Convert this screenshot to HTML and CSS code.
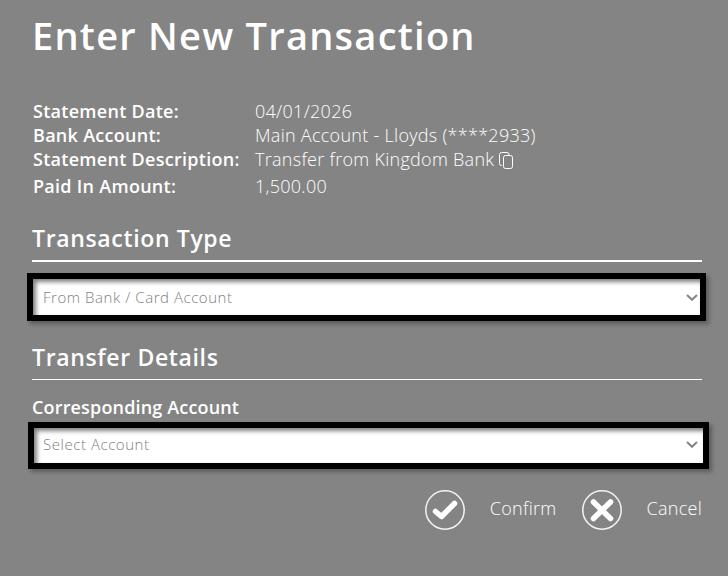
FILE: index.html
```html
<!DOCTYPE html>
<html lang="en">
<head>
    <meta charset="UTF-8">
    <meta name="viewport" content="width=device-width, initial-scale=1.0">
    <title>Enter New Transaction</title>
    <link rel="stylesheet" href="styles.css">
</head>
<body>
    <h1>Enter New Transaction</h1>

    <dl class="summary">
        <dt>Statement Date:</dt>
        <dd>04/01/2026</dd>
        <dt>Bank Account:</dt>
        <dd>Main Account - Lloyds (****2933)</dd>
        <dt>Statement Description:</dt>
        <dd>Transfer from Kingdom Bank
            <svg class="copy" width="16" height="18" viewBox="0 0 16 18">
                <path d="M4 13.5H3.5A2 2 0 0 1 1.5 11.5V2.5A2 2 0 0 1 3.5 .5H9A2 2 0 0 1 11 2.5V3"/>
                <rect x="5.5" y="3.5" width="9" height="13" rx="2"/>
            </svg>
        </dd>
        <dt>Paid In Amount:</dt>
        <dd>1,500.00</dd>
    </dl>

    <h2 class="type-title">Transaction Type</h2>
    <div class="select select-type">
        <span>From Bank / Card Account</span>
        <svg class="arrow" width="12" height="8" viewBox="0 0 12 8"><path d="M1 2L6 6.8L11 2"/></svg>
    </div>

    <h2 class="details-title">Transfer Details</h2>
    <p class="label">Corresponding Account</p>
    <div class="select select-account">
        <span>Select Account</span>
        <svg class="arrow" width="12" height="8" viewBox="0 0 12 8"><path d="M1 2L6 6.8L11 2"/></svg>
    </div>

    <div class="buttons">
        <a class="confirm">
            <svg class="round" width="40" height="40" viewBox="0 0 40 40">
                <circle cx="20" cy="20" r="19.2"/>
                <path d="M10.5 21.5L16.5 26.5L29.5 13.5"/>
            </svg>
            <span>Confirm</span>
        </a>
        <a class="cancel">
            <svg class="round" width="40" height="40" viewBox="0 0 40 40">
                <circle cx="20" cy="20" r="19.2"/>
                <path d="M11.5 12L28.5 28.5M28.5 12L11.5 28.5"/>
            </svg>
            <span>Cancel</span>
        </a>
    </div>
</body>
</html>
```
FILE: styles.css
```css
body {
    margin: 0;
    padding: 9px 26px 0 32px;
    height: 576px;
    box-sizing: border-box;
    overflow: hidden;
    background-color: #848484;
    color: white;
    font-family: 'Open Sans', 'Liberation Sans', sans-serif;
    font-size: 18px;
    font-weight: 300;
    letter-spacing: 0.28px;
}
h1 {
    margin: 0 0 38px;
    font-size: 38px;
    line-height: 52px;
    font-weight: 600;
    letter-spacing: 1.25px;
    white-space: nowrap;
}
.summary {
    display: grid;
    grid-template-columns: 222px 1fr;
    grid-template-rows: 24px 24px 27px 24px;
    margin: 0 0 0 1px;
    line-height: 24px;
    white-space: nowrap;
}
dt {
    font-weight: 600;
}
dd {
    margin: 0;
}
.copy {
    vertical-align: -4px;
    margin-left: -1px;
    fill: none;
    stroke: white;
}
h2 {
    margin: 0;
    font-size: 23px;
    line-height: 32px;
    font-weight: 600;
    letter-spacing: 0.65px;
}
.type-title {
    margin-top: 24px;
    padding-bottom: 6px;
    border-bottom: 2px solid white;
}
.details-title {
    margin-top: 20px;
    padding-bottom: 6px;
    border-bottom: 1px solid white;
}
.label {
    margin: 15px 0 3px;
    line-height: 24px;
    font-weight: 600;
    letter-spacing: 0.16px;
}
.select {
    display: flex;
    justify-content: space-between;
    align-items: center;
    box-sizing: border-box;
    border: 6px solid black;
    background-color: white;
    color: #808080;
    font-size: 15px;
    letter-spacing: 0.55px;
    box-shadow: 3px 3px 4px rgba(0, 0, 0, 0.3), inset 3px 3px 4px rgba(0, 0, 0, 0.5);
}
.select-type {
    height: 48px;
    margin: 11px -4px 0 -5px;
    padding: 0 2px 0 10px;
}
.select-account {
    height: 47px;
    margin: 0 -7px 0 -4px;
    padding: 0 5px 3px 9px;
}
.arrow {
    fill: none;
    stroke: #848484;
    stroke-width: 2;
}
.buttons {
    display: flex;
    justify-content: flex-end;
    margin-top: 21px;
}
.buttons a {
    display: flex;
    gap: 25px;
    line-height: 36px;
}
.buttons .cancel {
    gap: 24px;
    margin-left: 26px;
}
.round {
    fill: none;
    stroke: #f4f4f4;
    stroke-width: 1.5;
}
.round path {
    stroke: white;
    stroke-width: 5.5;
    stroke-linecap: round;
    stroke-linejoin: round;
}
```
